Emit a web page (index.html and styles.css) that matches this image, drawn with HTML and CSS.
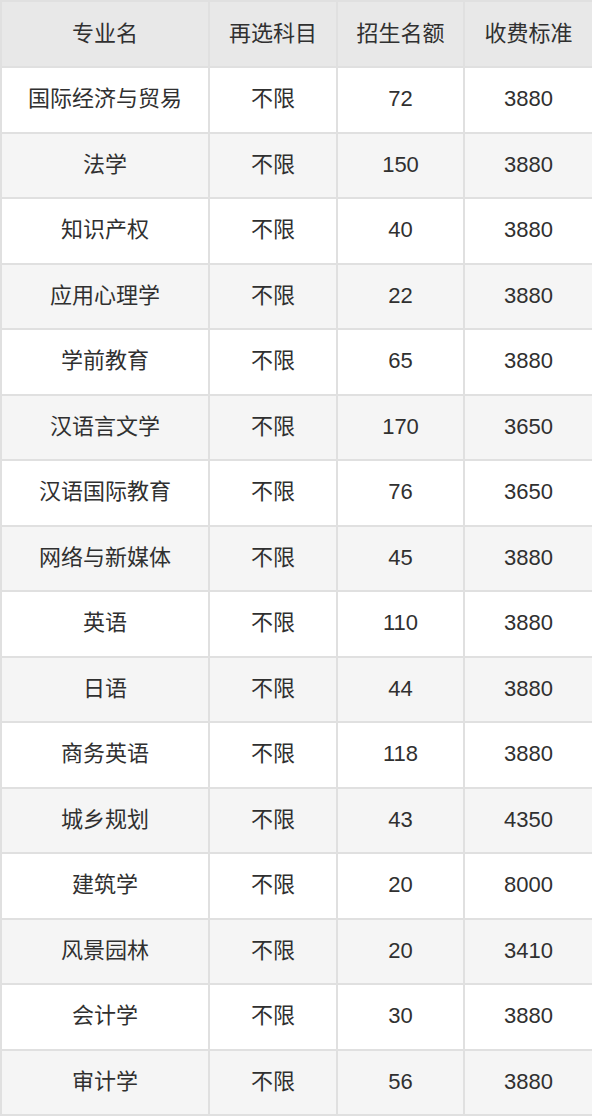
FILE: index.html
```html
<!DOCTYPE html>
<html lang="zh">
<head>
<meta charset="utf-8">
<link rel="stylesheet" href="styles.css">
</head>
<body>
<table class="plan">
<colgroup>
<col class="c1"><col class="c2"><col class="c3"><col class="c4">
</colgroup>
<thead>
<tr><th>专业名</th><th>再选科目</th><th>招生名额</th><th>收费标准</th></tr>
</thead>
<tbody>
<tr><td>国际经济与贸易</td><td>不限</td><td>72</td><td>3880</td></tr>
<tr><td>法学</td><td>不限</td><td>150</td><td>3880</td></tr>
<tr><td>知识产权</td><td>不限</td><td>40</td><td>3880</td></tr>
<tr><td>应用心理学</td><td>不限</td><td>22</td><td>3880</td></tr>
<tr><td>学前教育</td><td>不限</td><td>65</td><td>3880</td></tr>
<tr><td>汉语言文学</td><td>不限</td><td>170</td><td>3650</td></tr>
<tr><td>汉语国际教育</td><td>不限</td><td>76</td><td>3650</td></tr>
<tr><td>网络与新媒体</td><td>不限</td><td>45</td><td>3880</td></tr>
<tr><td>英语</td><td>不限</td><td>110</td><td>3880</td></tr>
<tr><td>日语</td><td>不限</td><td>44</td><td>3880</td></tr>
<tr><td>商务英语</td><td>不限</td><td>118</td><td>3880</td></tr>
<tr><td>城乡规划</td><td>不限</td><td>43</td><td>4350</td></tr>
<tr><td>建筑学</td><td>不限</td><td>20</td><td>8000</td></tr>
<tr><td>风景园林</td><td>不限</td><td>20</td><td>3410</td></tr>
<tr><td>会计学</td><td>不限</td><td>30</td><td>3880</td></tr>
<tr><td>审计学</td><td>不限</td><td>56</td><td>3880</td></tr>
</tbody>
</table>
</body>
</html>
```
FILE: styles.css
```css
html, body {
  margin: 0;
  padding: 0;
  background: #ffffff;
}
.plan {
  width: 592px;
  border-collapse: collapse;
  table-layout: fixed;
  font-family: "Liberation Sans", "Noto Sans CJK SC", sans-serif;
  font-size: 22px;
  line-height: 26px;
  color: #303030;
}
.c1 { width: 208px; }
.c2 { width: 128px; }
.c3 { width: 127px; }
.c4 { width: 129px; }
.plan th,
.plan td {
  border: 2px solid #e0e0e0;
  text-align: center;
  vertical-align: middle;
  padding: 0 0 1px 0;
  font-weight: normal;
}
.plan thead tr {
  height: 66px;
  background: #e8e8e8;
}
.plan tbody tr {
  height: 65.5px;
  background: #ffffff;
}
.plan tbody tr:nth-child(even) {
  background: #f5f5f5;
}
```
